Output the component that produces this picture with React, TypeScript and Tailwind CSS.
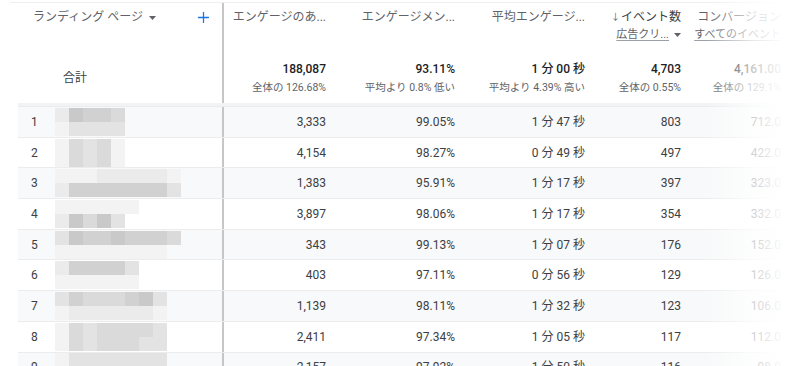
import React from 'react';
import { Plus } from 'lucide-react';

const shade: Record<string, string> = {
  a: 'bg-[#c9c9c9]',
  b: 'bg-[#d1d1d1]',
  c: 'bg-[#dadada]',
  d: 'bg-[#e3e3e3]',
  e: 'bg-[#ebebeb]',
  f: 'bg-[#f3f3f3]',
  '.': 'bg-transparent',
};

const rows = [
  { n: 1, top: 'eabbc.....', bot: 'fdddd.....', v: ['3,333', '99.05%', '1 分 47 秒', '803', '712.0'] },
  { n: 2, top: 'fcdcf.....', bot: 'fcdcf.....', v: ['4,154', '98.27%', '0 分 49 秒', '497', '422.0'] },
  { n: 3, top: 'fffeeeeef.', bot: 'ebbbbbbbd.', v: ['1,383', '95.91%', '1 分 17 秒', '397', '323.0'] },
  { n: 4, top: 'ffffff....', bot: 'eacad.....', v: ['3,897', '98.06%', '1 分 17 秒', '354', '332.0'] },
  { n: 5, top: 'dabbabbbc.', bot: 'ffffffff..', v: ['343', '99.13%', '1 分 07 秒', '176', '152.0'] },
  { n: 6, top: 'ebbbbd....', bot: 'ffffff....', v: ['403', '97.11%', '0 分 56 秒', '129', '126.0'] },
  { n: 7, top: 'dbcccbad..', bot: 'feeeeeef..', v: ['1,139', '98.11%', '1 分 32 秒', '123', '106.0'] },
  { n: 8, top: 'fcdccccd..', bot: 'fcdcccdd..', v: ['2,411', '97.34%', '1 分 05 秒', '117', '112.0'] },
  { n: 9, top: 'fddddddd..', bot: 'ffffffff..', v: ['2,157', '97.92%', '1 分 50 秒', '116', '98.0'] },
];

const colW = ['w-[110px]', 'w-[129px]', 'w-[130px]', 'w-[96px]', 'w-[100px]'];

function Caret() {
  return (
    <svg width="7" height="4" viewBox="0 0 7 4" className="inline-block">
      <path d="M0 0h7L3.5 4z" fill="#5f6368" />
    </svg>
  );
}

function Pixels({ top, bot }: { top: string; bot: string }) {
  return (
    <div className="flex flex-col">
      {[top, bot].map((line, i) => (
        <div key={i} className="flex">
          {line.split('').map((k, j) => (
            <div key={j} className={`w-[14px] h-[14px] ${shade[k]}`} />
          ))}
        </div>
      ))}
    </div>
  );
}

function HeadCell({ i, label, sub, total, note, strong }: { i: number; label: React.ReactNode; sub?: React.ReactNode; total: string; note: string; strong?: boolean }) {
  return (
    <div className={`${colW[i]} shrink-0 pr-2 pt-[6px] flex flex-col items-end text-right`}>
      <div className={`h-4 leading-4 text-[12px] whitespace-nowrap ${strong ? 'text-[#3c4043]' : 'text-[#5f6368]'}`}>{label}</div>
      <div className="h-4 leading-4 mt-[2px] text-[11px] whitespace-nowrap">{sub}</div>
      <div className="h-4 leading-4 mt-[18px] text-[12px] font-medium text-[#202124] whitespace-nowrap">{total}</div>
      <div className="h-4 leading-4 mt-[3px] text-[10.5px] text-[#5f6368] whitespace-nowrap">{note}</div>
    </div>
  );
}

export default function App() {
  return (
    <div className="w-[800px] h-[366px] overflow-hidden bg-white relative font-['Roboto','Noto_Sans_CJK_JP',sans-serif]">
      <div className="ml-[10px] h-[3px] border-b border-[#eceff1]" />
      <div className="pl-[18px]">
        {/* header */}
        <div className="flex h-[103px] border-b-[3px] border-[#f1f3f4]">
          <div className="w-[206px] shrink-0 border-r-2 border-[#c6c6c6] pl-[15px] pr-[10px] pt-[6px] flex flex-col">
            <div className="flex items-center h-4">
              <span className="text-[12px] text-[#5f6368] leading-4">ランディング ページ</span>
              <span className="ml-[6px] mt-[1px]"><Caret /></span>
              <Plus className="ml-auto" size={17} color="#1a73e8" strokeWidth={1.8} />
            </div>
            <div className="mt-[45px] ml-[30px] text-[12px] text-[#3c4043] leading-4">合計</div>
          </div>
          <HeadCell i={0} label="エンゲージのあ..." total="188,087" note="全体の 126.68%" />
          <HeadCell i={1} label="エンゲージメン..." total="93.11%" note="平均より 0.8% 低い" />
          <HeadCell i={2} label="平均エンゲージ..." total="1 分 00 秒" note="平均より 4.39% 高い" />
          <HeadCell
            i={3}
            strong
            label={
              <span className="flex items-center">
                <span className="text-[9px] text-[#5f6368] mr-[1px]">↓</span>
                <span>イベント数</span>
              </span>
            }
            total="4,703"
            note="全体の 0.55%"
            sub={
              <span className="flex items-center gap-[5px] text-[#5f6368]">
                <span className="underline decoration-[#9aa0a6] underline-offset-2">広告クリ...</span>
                <Caret />
              </span>
            }
          />
          <HeadCell
            i={4}
            label="コンバージョン"
            total="4,161.00"
            note="全体の 129.1%"
            sub={<span className="text-[#5f6368] underline decoration-[#9aa0a6] underline-offset-2">すべてのイベント</span>}
          />
        </div>
        {/* rows */}
        {rows.map((r, idx) => (
          <div key={r.n} className={`flex h-[30.7px] border-t border-[#ececec] ${idx % 2 === 0 ? 'bg-[#f8f9fa]' : 'bg-white'}`}>
            <div className="w-[206px] shrink-0 border-r-2 border-[#c6c6c6] pl-[13px] flex items-center">
              <span className="w-[24px] text-[12px] text-[#3c4043]">{r.n}</span>
              <Pixels top={r.top} bot={r.bot} />
            </div>
            {r.v.map((val, i) => (
              <div key={i} className={`${colW[i]} shrink-0 pr-2 flex items-center justify-end text-[12px] text-[#3c4043] whitespace-nowrap`}>
                {val}
              </div>
            ))}
          </div>
        ))}
      </div>
      <div className="absolute top-0 right-0 h-full w-[95px] bg-gradient-to-r from-white/0 via-white/75 to-white to-85%" />
    </div>
  );
}
